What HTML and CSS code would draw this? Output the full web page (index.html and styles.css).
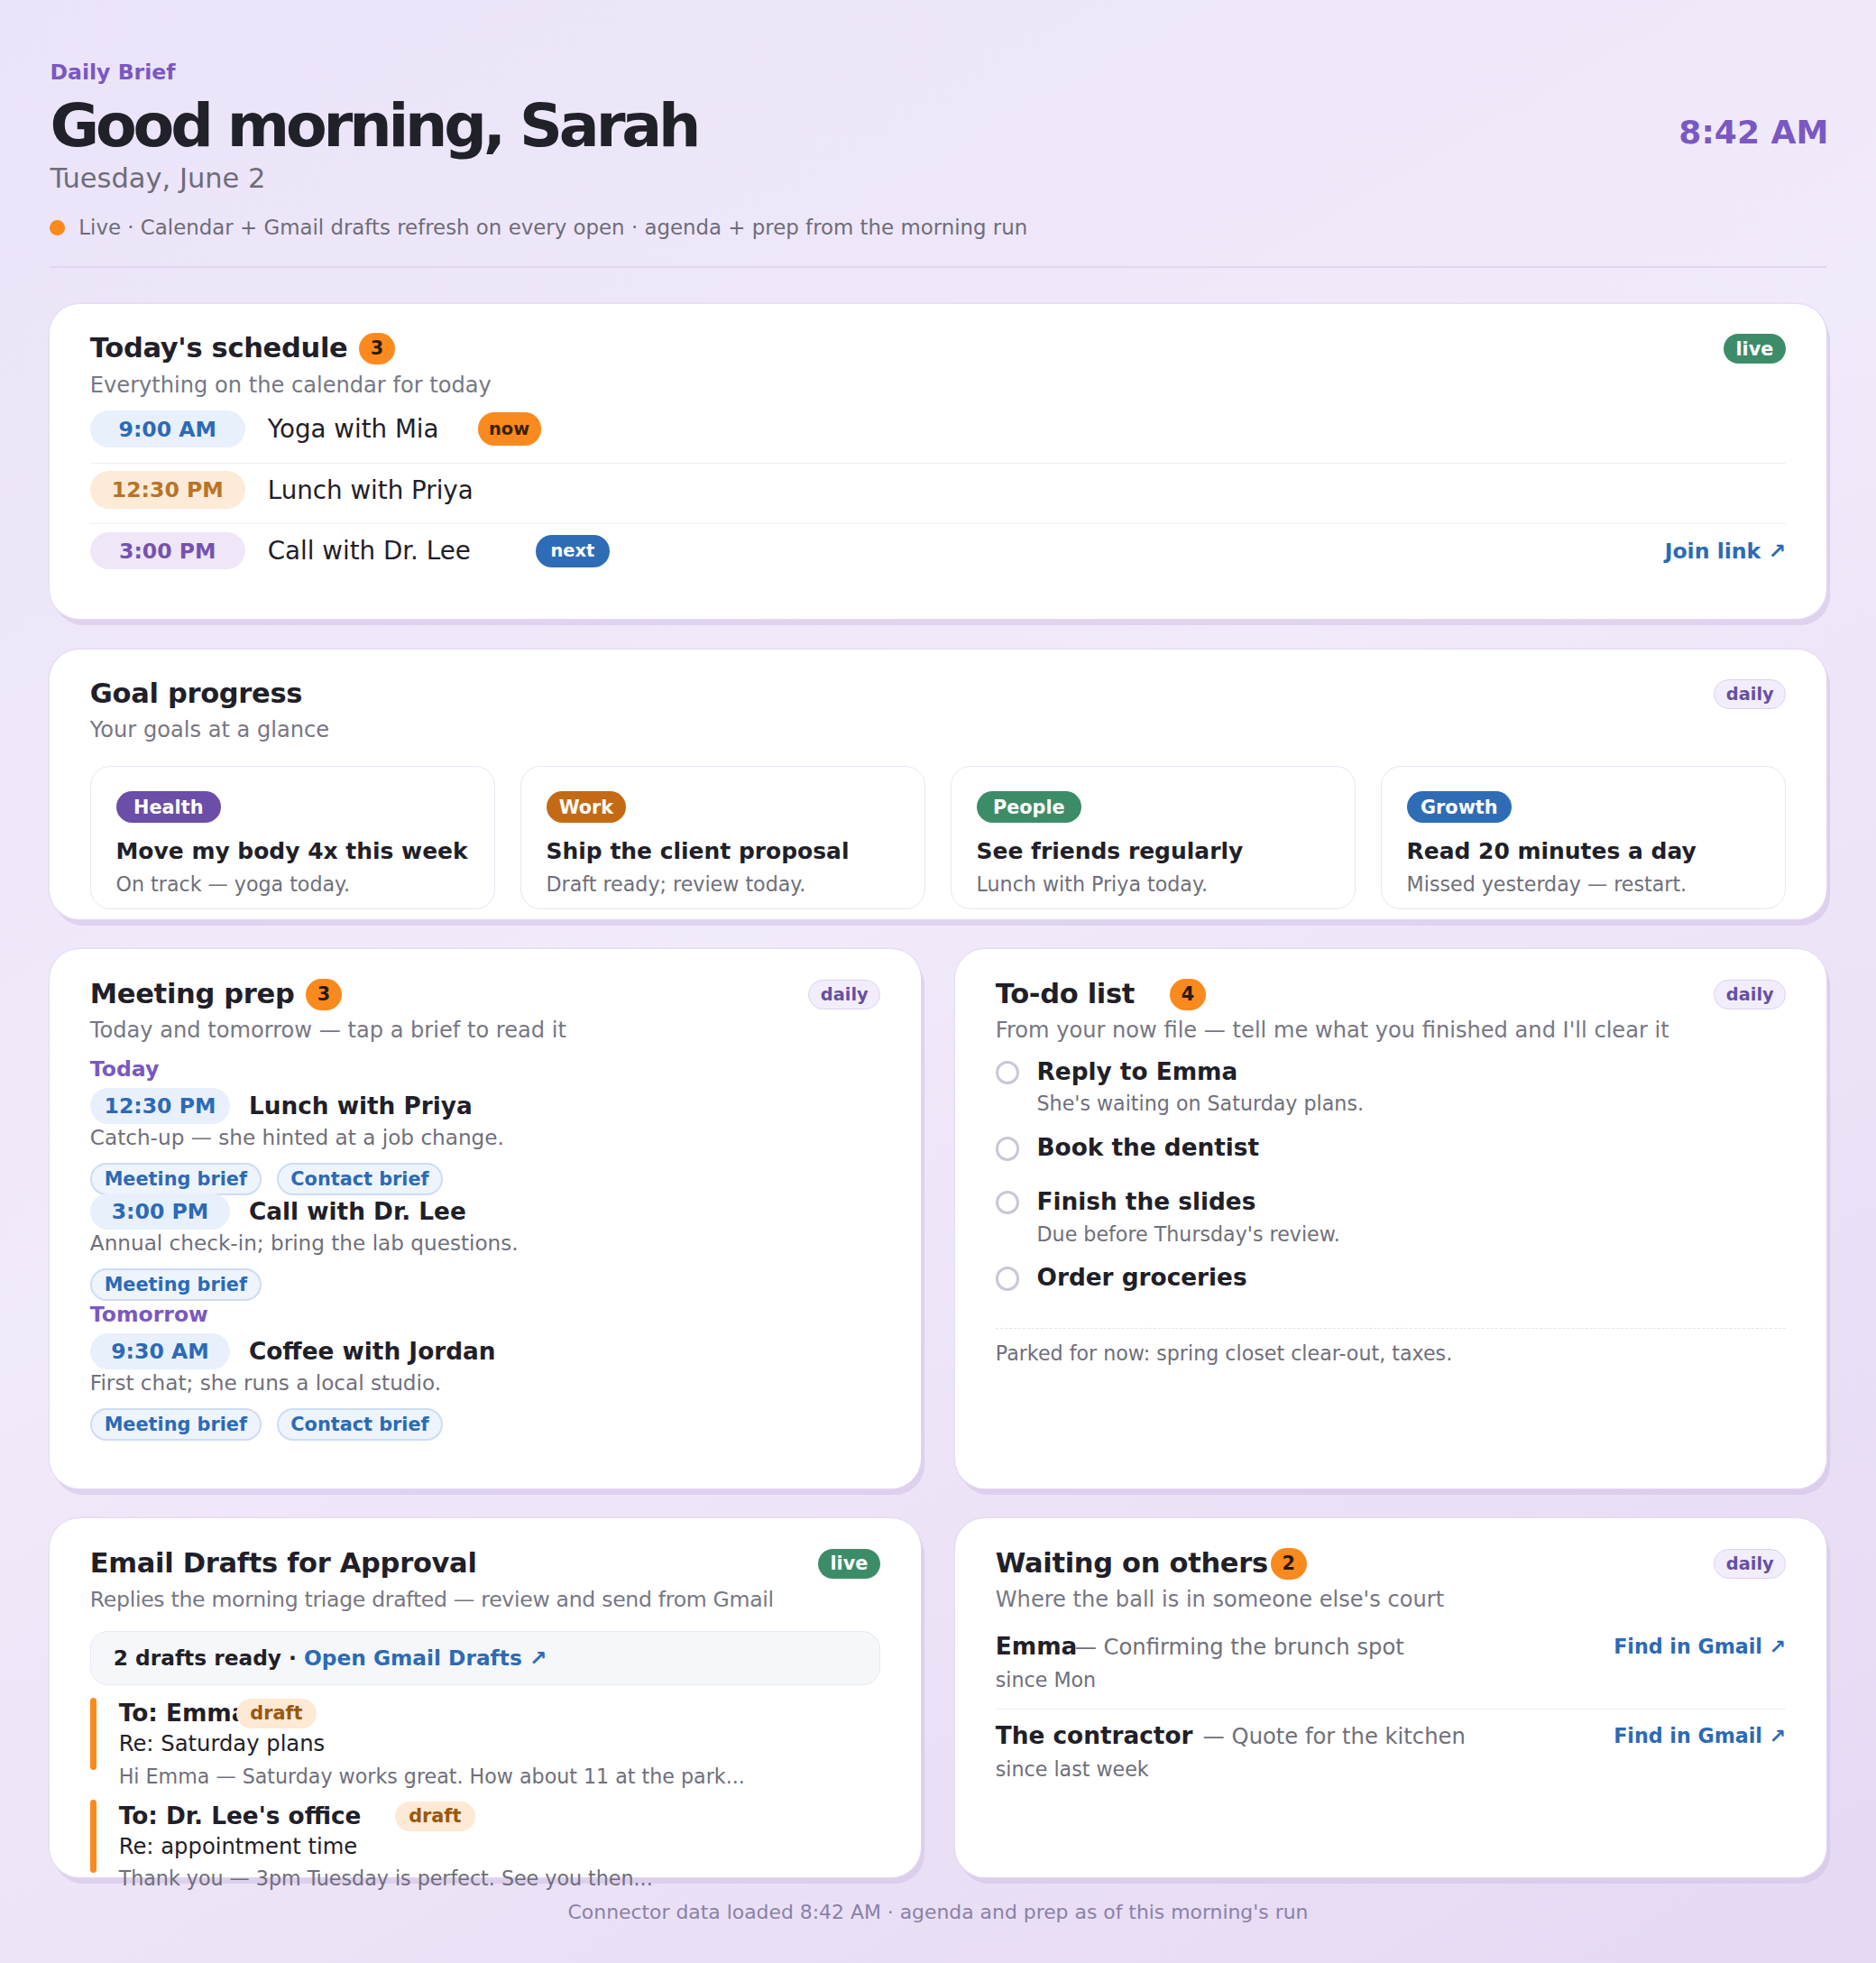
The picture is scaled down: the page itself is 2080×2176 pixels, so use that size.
FILE: index.html
```
<!DOCTYPE html>
<html lang="en">
<head>
<meta charset="utf-8">
<title>Daily Brief</title>
<link rel="stylesheet" href="styles.css">
</head>
<body>
<div class="page">
  <header class="hero">
    <div class="hero-main">
      <div class="eyebrow">Daily Brief</div>
      <h1 class="greeting">Good morning, Sarah</h1>
      <div class="date">Tuesday, June 2</div>
    </div>
    <div class="clock">8:42 AM</div>
  </header>
  <div class="status"><span class="dot"></span>Live · Calendar + Gmail drafts refresh on every open · agenda + prep from the morning run</div>
  <div class="divider"></div>

  <main class="stack">
    <section class="card card-schedule">
      <div class="card-head">
        <h2 class="card-title">Today's schedule <span class="count">3</span></h2>
        <span class="chip chip-live">live</span>
      </div>
      <p class="card-sub">Everything on the calendar for today</p>
      <div class="sched">
        <div class="sched-row">
          <span class="time time-blue">9:00 AM</span>
          <span class="event">Yoga with Mia</span>
          <span class="tag tag-now">now</span>
        </div>
        <div class="sched-row">
          <span class="time time-amber">12:30 PM</span>
          <span class="event">Lunch with Priya</span>
        </div>
        <div class="sched-row">
          <span class="time time-violet">3:00 PM</span>
          <span class="event">Call with Dr. Lee</span>
          <span class="tag tag-next">next</span>
          <a class="join">Join link ↗</a>
        </div>
      </div>
    </section>

    <section class="card card-goals">
      <div class="card-head">
        <h2 class="card-title">Goal progress</h2>
        <span class="chip chip-daily">daily</span>
      </div>
      <p class="card-sub">Your goals at a glance</p>
      <div class="goals">
        <div class="goal">
          <span class="goal-tag g-health">Health</span>
          <div class="goal-title">Move my body 4x this week</div>
          <div class="goal-note">On track — yoga today.</div>
        </div>
        <div class="goal">
          <span class="goal-tag g-work">Work</span>
          <div class="goal-title">Ship the client proposal</div>
          <div class="goal-note">Draft ready; review today.</div>
        </div>
        <div class="goal">
          <span class="goal-tag g-people">People</span>
          <div class="goal-title">See friends regularly</div>
          <div class="goal-note">Lunch with Priya today.</div>
        </div>
        <div class="goal">
          <span class="goal-tag g-growth">Growth</span>
          <div class="goal-title">Read 20 minutes a day</div>
          <div class="goal-note">Missed yesterday — restart.</div>
        </div>
      </div>
    </section>

    <div class="pair pair-mid">
      <section class="card">
        <div class="card-head">
          <h2 class="card-title">Meeting prep <span class="count">3</span></h2>
          <span class="chip chip-daily">daily</span>
        </div>
        <p class="card-sub">Today and tomorrow — tap a brief to read it</p>
        <div class="day-label first">Today</div>
        <div class="prep">
          <div class="prep-head"><span class="ptime">12:30 PM</span><span class="prep-title">Lunch with Priya</span></div>
          <div class="prep-desc">Catch-up — she hinted at a job change.</div>
          <div class="briefs"><a class="brief">Meeting brief</a><a class="brief">Contact brief</a></div>
        </div>
        <div class="prep">
          <div class="prep-head"><span class="ptime">3:00 PM</span><span class="prep-title">Call with Dr. Lee</span></div>
          <div class="prep-desc">Annual check-in; bring the lab questions.</div>
          <div class="briefs"><a class="brief">Meeting brief</a></div>
        </div>
        <div class="day-label">Tomorrow</div>
        <div class="prep">
          <div class="prep-head"><span class="ptime">9:30 AM</span><span class="prep-title">Coffee with Jordan</span></div>
          <div class="prep-desc">First chat; she runs a local studio.</div>
          <div class="briefs"><a class="brief">Meeting brief</a><a class="brief">Contact brief</a></div>
        </div>
      </section>

      <section class="card">
        <div class="card-head">
          <h2 class="card-title">To-do list <span class="count count-wide">4</span></h2>
          <span class="chip chip-daily">daily</span>
        </div>
        <p class="card-sub">From your now file — tell me what you finished and I'll clear it</p>
        <ul class="todos">
          <li class="todo"><span class="check"></span><div><div class="todo-title">Reply to Emma</div><div class="todo-note">She's waiting on Saturday plans.</div></div></li>
          <li class="todo"><span class="check"></span><div><div class="todo-title">Book the dentist</div></div></li>
          <li class="todo"><span class="check"></span><div><div class="todo-title">Finish the slides</div><div class="todo-note">Due before Thursday's review.</div></div></li>
          <li class="todo"><span class="check"></span><div><div class="todo-title">Order groceries</div></div></li>
        </ul>
        <div class="parked">Parked for now: spring closet clear-out, taxes.</div>
      </section>
    </div>

    <div class="pair pair-low">
      <section class="card">
        <div class="card-head">
          <h2 class="card-title">Email Drafts for Approval</h2>
          <span class="chip chip-live">live</span>
        </div>
        <p class="card-sub card-sub-tight">Replies the morning triage drafted — review and send from Gmail</p>
        <div class="drafts-bar"><b>2 drafts ready · </b><a class="link">Open Gmail Drafts ↗</a></div>
        <div class="draft">
          <span class="draft-rule"></span>
          <div class="draft-body">
            <div class="draft-to">To: Emma<span class="draft-tag tag-overlap">draft</span></div>
            <div class="draft-subject">Re: Saturday plans</div>
            <div class="draft-preview">Hi Emma — Saturday works great. How about 11 at the park...</div>
          </div>
        </div>
        <div class="draft">
          <span class="draft-rule"></span>
          <div class="draft-body">
            <div class="draft-to">To: Dr. Lee's office<span class="draft-tag">draft</span></div>
            <div class="draft-subject">Re: appointment time</div>
            <div class="draft-preview">Thank you — 3pm Tuesday is perfect. See you then...</div>
          </div>
        </div>
      </section>

      <section class="card">
        <div class="card-head">
          <h2 class="card-title">Waiting on others<span class="count count-tight">2</span></h2>
          <span class="chip chip-daily">daily</span>
        </div>
        <p class="card-sub">Where the ball is in someone else's court</p>
        <div class="wait">
          <div class="wait-main">
            <div class="wait-line"><b class="who">Emma</b><span class="what what-tight">— Confirming the brunch spot</span></div>
            <div class="since">since Mon</div>
          </div>
          <a class="find">Find in Gmail ↗</a>
        </div>
        <div class="wait">
          <div class="wait-main">
            <div class="wait-line"><b class="who">The contractor</b><span class="what">— Quote for the kitchen</span></div>
            <div class="since">since last week</div>
          </div>
          <a class="find">Find in Gmail ↗</a>
        </div>
      </section>
    </div>
  </main>

  <footer class="foot">Connector data loaded 8:42 AM · agenda and prep as of this morning's run</footer>
</div>
</body>
</html>
```
FILE: styles.css
```
html {
  zoom: 1.38667;
  background: #ece4f8;
}

* { box-sizing: border-box; }

body {
  margin: 0;
  font-family: "DejaVu Sans", "Noto Sans", sans-serif;
  color: #1f2029;
  background: linear-gradient(150deg, #ebe3f8 0%, #f1eafa 45%, #e5d9f3 100%);
  min-height: 1569px;
}

.page {
  padding: 47px 40px 31px;
}

/* header */
.hero {
  display: flex;
  justify-content: space-between;
  align-items: flex-start;
}
.eyebrow {
  font-size: 17px;
  line-height: 22px;
  font-weight: 700;
  color: #7a58c2;
}
.greeting {
  margin: 4px 0 0;
  font-size: 48px;
  line-height: 56px;
  font-weight: 700;
  letter-spacing: -0.062em;
  color: #202129;
}
.date {
  font-size: 22px;
  line-height: 28px;
  color: #6d6d79;
}
.clock {
  margin-top: 43px;
  margin-right: -2px;
  font-size: 26px;
  line-height: 32px;
  font-weight: 700;
  color: #7a58c2;
}
.status {
  display: flex;
  align-items: center;
  margin-top: 14px;
  font-size: 16.5px;
  line-height: 22px;
  color: #6d6d79;
}
.dot {
  width: 12px;
  height: 12px;
  border-radius: 50%;
  background: #fb8a1e;
  margin-right: 11px;
}
.divider {
  height: 1px;
  margin: 20px 0 29px;
  background: #e2d6ef;
}

/* cards */
.stack {
  display: flex;
  flex-direction: column;
  gap: 24px;
}
.card {
  background: #ffffff;
  border-radius: 24px;
  padding: 22px 32px 0;
  box-shadow: 0 0 0 1px rgba(226, 216, 242, 0.7), 3px 5px 0 rgba(205, 190, 228, 0.5);
}
.card-schedule { height: 252px; }
.card-goals { height: 216px; }
.pair {
  display: grid;
  grid-template-columns: 1fr 1fr;
  gap: 28px;
}
.pair-mid .card { height: 431px; }
.pair-low .card { height: 287px; }

.card-head {
  display: flex;
  justify-content: space-between;
  align-items: center;
}
.card-title {
  margin: 0;
  display: flex;
  align-items: center;
  font-size: 22px;
  line-height: 28px;
  font-weight: 700;
  letter-spacing: -0.01em;
  color: #1f2029;
}
.card-sub {
  margin: 4px 0 0;
  font-size: 17.4px;
  line-height: 22px;
  color: #777783;
}
.card-sub-tight {
  font-size: 17px;
  letter-spacing: -0.013em;
}
.count {
  display: inline-flex;
  align-items: center;
  justify-content: center;
  min-width: 29px;
  height: 25px;
  margin-left: 9px;
  border-radius: 13px;
  background: #fb8a1e;
  color: #2a1a06;
  font-size: 15px;
  font-weight: 700;
  letter-spacing: 0;
}
.count-wide { margin-left: 28px; }
.count-tight { margin-left: 2px; }

.chip {
  display: inline-flex;
  align-items: center;
  height: 24px;
  border-radius: 12px;
  font-size: 14px;
  font-weight: 700;
}
.chip-live {
  padding: 0 10px;
  background: #3d8c68;
  color: #ffffff;
  font-size: 15px;
}
.chip-daily {
  padding: 0 9px;
  background: #f2edfb;
  border: 1px solid #ddd1f1;
  color: #6650a3;
}

/* schedule */
.sched { margin-top: 3px; }
.sched-row {
  display: flex;
  align-items: center;
  padding: 6px 0 12px;
}
.sched-row + .sched-row { border-top: 1px solid #eeeef4; }
.time {
  width: 124px;
  height: 30px;
  border-radius: 15px;
  display: flex;
  align-items: center;
  justify-content: center;
  font-size: 17px;
  font-weight: 700;
}
.time-blue { background: #e8f0fb; color: #2c6ab6; }
.time-amber { background: #fdebd8; color: #b87428; }
.time-violet { background: #efe6f8; color: #7452b0; }
.event {
  margin-left: 18px;
  font-size: 20px;
  color: #1f2029;
}
.tag {
  display: inline-flex;
  align-items: center;
  height: 26px;
  border-radius: 13px;
  font-size: 14px;
  font-weight: 700;
}
.tag-now { margin-left: 31px; padding: 0 9px; background: #fb8a1e; color: #3a2204; }
.tag-next { margin-left: 52px; padding: 0 12px; background: #2e6db5; color: #ffffff; }
.join {
  margin-left: auto;
  font-size: 17px;
  font-weight: 700;
  color: #2c6ab6;
}

/* goals */
.goals {
  margin-top: 17px;
  display: grid;
  grid-template-columns: repeat(4, 1fr);
  gap: 20px;
}
.goal {
  height: 115px;
  padding: 20px 20px 0;
  border: 1px solid #e5e8f3;
  border-radius: 16px;
}
.goal-tag {
  display: inline-flex;
  align-items: center;
  justify-content: center;
  width: 84px;
  height: 25px;
  border-radius: 13px;
  color: #ffffff;
  font-size: 15px;
  font-weight: 700;
}
.g-health { background: #6a4ea8; }
.g-work { background: #c46a14; width: 64px; }
.g-people { background: #3d8c68; }
.g-growth { background: #2e6db5; }
.goal-title {
  margin-top: 11px;
  font-size: 18px;
  line-height: 24px;
  font-weight: 700;
}
.goal-note {
  margin-top: 5px;
  font-size: 16px;
  line-height: 20px;
  color: #6f6f7b;
}

/* meeting prep */
.day-label {
  font-size: 17px;
  line-height: 22px;
  font-weight: 700;
  color: #7a58c2;
}
.day-label.first { margin-top: 9px; }
.day-label + .prep { margin-top: 4px; }
.prep + .prep { margin-top: -2px; }
.prep-head {
  display: flex;
  align-items: center;
  height: 29px;
}
.ptime {
  width: 112px;
  height: 29px;
  border-radius: 15px;
  background: #e8f0fb;
  color: #2c6ab6;
  display: flex;
  align-items: center;
  justify-content: center;
  font-size: 17px;
  font-weight: 700;
}
.prep-title {
  margin-left: 15px;
  font-size: 19px;
  font-weight: 700;
}
.prep-desc {
  font-size: 16.7px;
  line-height: 22px;
  color: #6f6f7b;
}
.briefs {
  margin-top: 9px;
  display: flex;
  gap: 12px;
}
.brief {
  display: inline-flex;
  align-items: center;
  height: 26px;
  padding: 0 10px;
  border-radius: 13px;
  background: #eef4fc;
  border: 1.5px solid #cfdcf0;
  color: #2c6ab6;
  font-size: 15px;
  font-weight: 700;
}

/* todo */
.todos {
  list-style: none;
  margin: 10px 0 0;
  padding: 0;
  display: flex;
  flex-direction: column;
  gap: 13px;
}
.todo {
  display: flex;
  align-items: flex-start;
  min-height: 30px;
}
.check {
  flex: none;
  width: 19px;
  height: 19px;
  margin-top: 3px;
  margin-right: 14px;
  border: 2.2px solid #c8c8d5;
  border-radius: 50%;
}
.todo-title {
  font-size: 19px;
  line-height: 24px;
  font-weight: 700;
}
.todo-note {
  margin-top: 4px;
  font-size: 16px;
  line-height: 20px;
  color: #6f6f7b;
}
.parked {
  margin-top: 22px;
  padding-top: 10px;
  border-top: 1px dashed #e3e3ec;
  font-size: 16px;
  line-height: 20px;
  color: #6f6f7b;
}

/* drafts */
.drafts-bar {
  margin-top: 14px;
  height: 43px;
  display: flex;
  align-items: center;
  padding: 0 18px;
  background: #f5f7fa;
  border: 1px solid #e6eaf2;
  border-radius: 14px;
  font-size: 16.8px;
  color: #1f2029;
}
.drafts-bar b { white-space: pre; }
.link {
  font-weight: 700;
  color: #2c6ab6;
}
.draft {
  display: flex;
  align-items: flex-start;
  margin-top: 10px;
}
.draft + .draft { margin-top: 8px; }
.draft-rule {
  flex: none;
  width: 5px;
  height: 58px;
  border-radius: 3px;
  background: #fb8a1e;
}
.draft-body {
  margin-left: 18px;
  padding-top: 1px;
}
.draft-to {
  display: flex;
  align-items: center;
  font-size: 19px;
  line-height: 24px;
  font-weight: 700;
}
.draft-tag {
  display: inline-flex;
  align-items: center;
  height: 24px;
  margin-left: 27px;
  padding: 0 11px;
  border-radius: 12px;
  background: #fde9d4;
  color: #9a5710;
  font-size: 15px;
  font-weight: 700;
}
.tag-overlap { margin-left: -9px; }
.draft-subject {
  font-size: 17.5px;
  line-height: 24px;
}
.draft-preview {
  margin-top: 3px;
  font-size: 16px;
  line-height: 22px;
  color: #6f6f7b;
}

/* waiting */
.wait {
  display: flex;
  justify-content: space-between;
  align-items: flex-start;
  padding: 8px 0 12px;
}
.card-sub + .wait { margin-top: 5px; }
.wait + .wait { border-top: 1px solid #eeeef4; }
.wait-line {
  display: flex;
  align-items: baseline;
  line-height: 26px;
}
.who {
  font-size: 19px;
  font-weight: 700;
}
.what {
  margin-left: 8px;
  font-size: 17.5px;
  color: #6f6f7b;
}
.what-tight { margin-left: -2px; }
.since {
  margin-top: 4px;
  font-size: 16px;
  line-height: 20px;
  color: #6f6f7b;
}
.find {
  font-size: 16px;
  line-height: 26px;
  font-weight: 700;
  color: #2c6ab6;
}

.foot {
  margin-top: 18px;
  text-align: center;
  font-size: 15.8px;
  line-height: 20px;
  color: #8a81a8;
}
```
